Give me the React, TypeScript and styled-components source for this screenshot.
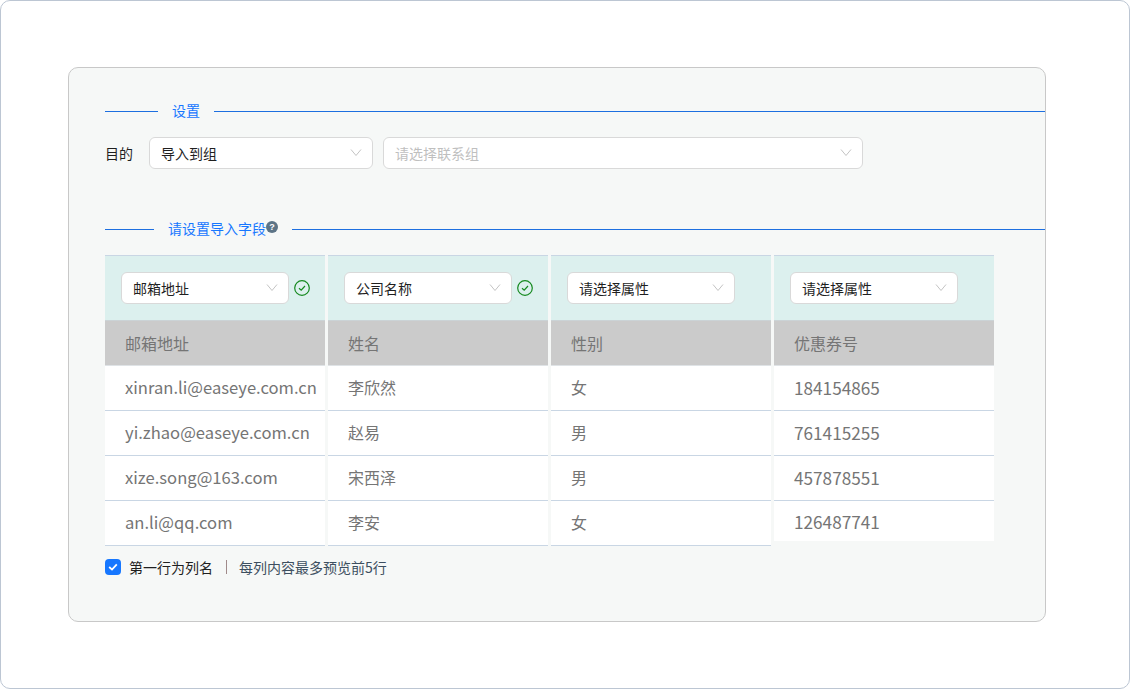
import React from "react";
import styled, { createGlobalStyle } from "styled-components";

const FONT = `"Noto Sans CJK SC", sans-serif`;

const Global = createGlobalStyle`
  html, body { margin: 0; padding: 0; background: #fff; }
  * { box-sizing: border-box; }
`;

const Frame = styled.div`
  width: 1130px;
  height: 689px;
  padding: 66px 83px 0 67px;
  background: #fff;
  border: 1px solid #bcc6d3;
  border-radius: 10px;
  font-family: ${FONT};
  overflow: hidden;
`;

const Panel = styled.div`
  width: 978px;
  height: 555px;
  padding: 32px 0 0 36px;
  background: #f6f8f7;
  border: 1px solid #c8c8c8;
  border-radius: 10px;
`;

const Legend = styled.div<{ $lead: number; $top?: number }>`
  display: flex;
  align-items: center;
  height: 22px;
  margin-top: ${(p) => p.$top ?? 0}px;
  font-size: 14px;
  line-height: 22px;
  color: #1677ff;
  &::before {
    content: "";
    flex: 0 0 ${(p) => p.$lead}px;
    height: 1px;
    background: #1d6fe0;
    margin-right: 14px;
  }
  &::after {
    content: "";
    flex: 1;
    height: 1px;
    background: #1d6fe0;
    margin-left: 14px;
  }
`;

const LegendText = styled.span`
  display: inline-flex;
  align-items: center;
  margin-bottom: 2px;
`;

const HelpMark = styled.span`
  display: inline-flex;
  align-items: center;
  justify-content: center;
  width: 12px;
  height: 12px;
  margin-bottom: 2px;
  border-radius: 50%;
  background: #5c7486;
  color: #fff;
  font-family: "Liberation Sans", sans-serif;
  font-size: 9px;
  font-weight: 700;
  line-height: 12px;
`;

const TargetRow = styled.div`
  display: flex;
  align-items: center;
  gap: 10px;
  margin-top: 15px;
`;

const TargetLabel = styled.span`
  width: 34px;
  font-size: 14px;
  color: #1f1f1f;
`;

const SelectBox = styled.div<{ $width: number; $muted?: boolean }>`
  display: flex;
  align-items: center;
  justify-content: space-between;
  flex: 0 0 ${(p) => p.$width}px;
  width: ${(p) => p.$width}px;
  height: 32px;
  padding: 0 10px 0 11px;
  background: #fff;
  border: 1px solid #d9d9d9;
  border-radius: 6px;
  font-size: 14px;
  color: ${(p) => (p.$muted ? "#bfbfbf" : "#1f1f1f")};
`;

const Chevron = () => (
  <svg width="12" height="12" viewBox="0 0 12 12" fill="none">
    <path d="M1 2.5 L6 8.5 L11 2.5" stroke="#c4c4c4" strokeWidth="1" />
  </svg>
);

const CheckMark = styled.svg`
  flex: 0 0 16px;
  width: 16px;
  height: 16px;
`;

const Grid = styled.div`
  display: grid;
  grid-template-columns: repeat(4, 220px);
  column-gap: 3px;
  margin-top: 15px;
  align-items: start;
`;

const Column = styled.div`
  display: flex;
  flex-direction: column;
`;

const MapCell = styled.div`
  display: flex;
  align-items: center;
  gap: 5px;
  height: 66px;
  padding-left: 16px;
  background: #dcf0ee;
  border-top: 1px solid #c9d6e4;
  border-bottom: 1px solid #cbd3d6;
`;

const HeadCell = styled.div`
  display: flex;
  align-items: center;
  height: 45px;
  padding-left: 20px;
  background: #cbcbcb;
  border-bottom: 1px solid #dfe3e6;
  font-size: 16px;
  color: #757575;
`;

const DataCell = styled.div<{ $open?: boolean; $size: number }>`
  display: flex;
  align-items: center;
  height: ${(p) => (p.$open ? 40 : 45)}px;
  padding: ${(p) => (p.$open ? "0 0 0 20px" : "0 0 2px 20px")};
  background: #fff;
  border-bottom: ${(p) => (p.$open ? "none" : "1px solid #c9d6e4")};
  font-size: ${(p) => p.$size}px;
  color: #757575;
  white-space: nowrap;
`;

const Foot = styled.div`
  display: flex;
  align-items: center;
  height: 18px;
  margin-top: 12px;
  font-size: 14px;
`;

const Box = styled.span`
  display: inline-flex;
  align-items: center;
  justify-content: center;
  width: 16px;
  height: 16px;
  margin-right: 8px;
  background: #1677ff;
  border-radius: 4px;
`;

const FootLabel = styled.span`
  color: #1f1f1f;
`;

const Divider = styled.span`
  width: 1px;
  height: 14px;
  margin: 0 12px 0 13px;
  background: #a08a8a;
`;

const FootNote = styled.span`
  color: #3d4f60;
`;

const columns = [
  { select: "邮箱地址", ok: true, size: 16.6, head: "邮箱地址", rows: ["xinran.li@easeye.com.cn", "yi.zhao@easeye.com.cn", "xize.song@163.com", "an.li@qq.com"] },
  { select: "公司名称", ok: true, size: 16, head: "姓名", rows: ["李欣然", "赵易", "宋西泽", "李安"] },
  { select: "请选择属性", ok: false, size: 16, head: "性别", rows: ["女", "男", "男", "女"] },
  { select: "请选择属性", ok: false, size: 17.2, head: "优惠券号", rows: ["184154865", "761415255", "457878551", "126487741"] },
];

export default function App() {
  return (
    <Frame>
      <Global />
      <Panel>
        <Legend $lead={53}>
          <LegendText>设置</LegendText>
        </Legend>
        <TargetRow>
          <TargetLabel>目的</TargetLabel>
          <SelectBox $width={224}>
            导入到组
            <Chevron />
          </SelectBox>
          <SelectBox $width={480} $muted>
            请选择联系组
            <Chevron />
          </SelectBox>
        </TargetRow>
        <Legend $lead={49} $top={49}>
          <LegendText>
            请设置导入字段
            <HelpMark>?</HelpMark>
          </LegendText>
        </Legend>
        <Grid>
          {columns.map((col, c) => (
            <Column key={c}>
              <MapCell>
                <SelectBox $width={168}>
                  {col.select}
                  <Chevron />
                </SelectBox>
                {col.ok && (
                  <CheckMark viewBox="0 0 16 16" fill="none">
                    <circle cx="8" cy="8" r="7.3" stroke="#15891f" strokeWidth="1.2" />
                    <path d="M5 8.2 L7.2 10.2 L11 6" stroke="#15891f" strokeWidth="1.2" />
                  </CheckMark>
                )}
              </MapCell>
              <HeadCell>{col.head}</HeadCell>
              {col.rows.map((r, i) => (
                <DataCell key={i} $size={col.size} $open={c === 3 && i === 3}>
                  {r}
                </DataCell>
              ))}
            </Column>
          ))}
        </Grid>
        <Foot>
          <Box>
            <svg width="10" height="10" viewBox="0 0 10 10" fill="none">
              <path d="M1.2 5 L4 7.6 L8.8 2.4" stroke="#fff" strokeWidth="1.8" />
            </svg>
          </Box>
          <FootLabel>第一行为列名</FootLabel>
          <Divider />
          <FootNote>每列内容最多预览前5行</FootNote>
        </Foot>
      </Panel>
    </Frame>
  );
}
